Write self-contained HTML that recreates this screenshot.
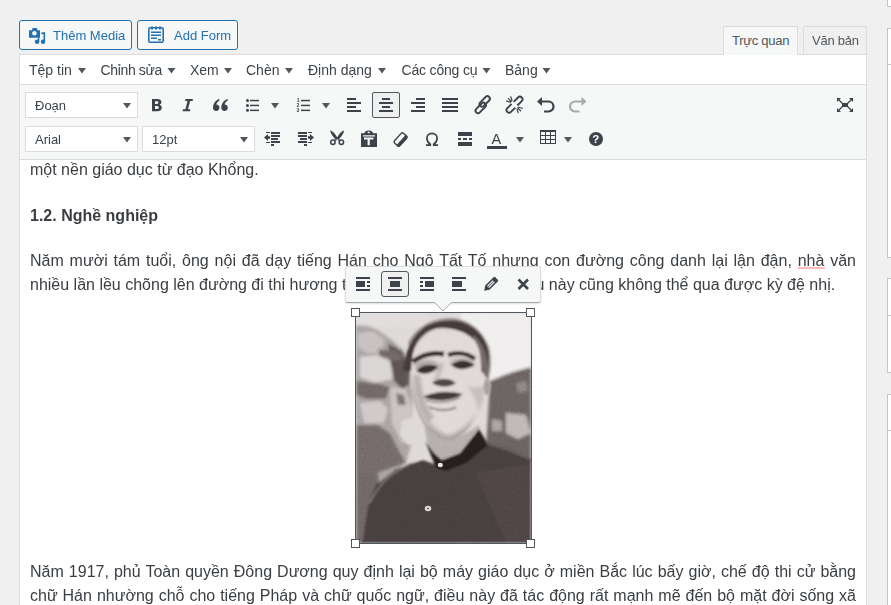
<!DOCTYPE html>
<html><head><meta charset="utf-8">
<style>
*{box-sizing:border-box}
html,body{margin:0;padding:0}
body{width:891px;height:605px;overflow:hidden;background:#f0f0f1;position:relative;font-family:"Liberation Sans",sans-serif;color:#3c434a}
.a{position:absolute}
.box{position:absolute;left:887px;width:40px;background:#fff;border:1px solid #c3c4c7}
.btn{position:absolute;top:20px;height:30px;border:1px solid #2271b1;border-radius:3px;background:#f6f7f7;color:#2271b1;font-size:13px}
.btn span{position:absolute;top:7px;white-space:nowrap}
.tab{position:absolute;top:26px;height:29px;border:1px solid #dcdcde;font-size:13px;color:#50575e;letter-spacing:-0.25px}
.tab span{position:absolute;top:6px;white-space:nowrap}
.menu{position:absolute;top:62px;font-size:14px;color:#3c434a;white-space:nowrap}
.sel{position:absolute;height:26px;width:113px;border:1px solid #dcdcde;background:#fff;font-size:13px;color:#3c434a}
.sel span{position:absolute;left:9px;top:5px}
.txt{position:absolute;left:30px;width:826px;font-size:16px;line-height:24px;color:#3a3e42;white-space:nowrap}
.j{text-align:justify;text-align-last:justify;white-space:normal}
</style></head><body>

<!-- sidebar boxes -->
<div class="box" style="top:-10px;height:17px"></div>
<div class="box" style="top:28px;height:230px"><div class="a" style="left:0;top:35px;width:40px;height:1px;background:#c3c4c7"></div></div>
<div class="box" style="top:278px;height:95px"><div class="a" style="left:0;top:36px;width:40px;height:1px;background:#c3c4c7"></div></div>
<div class="box" style="top:394px;height:240px"><div class="a" style="left:0;top:35px;width:40px;height:1px;background:#c3c4c7"></div></div>

<!-- buttons -->
<div class="btn" style="left:19px;width:113px"><span style="left:33px">Thêm Media</span></div>
<div class="btn" style="left:137px;width:101px"><span style="left:36px">Add Form</span></div>

<!-- tabs -->
<div class="tab" style="left:723px;width:75px;background:#f6f7f7;border-bottom-color:#f6f7f7;z-index:3"><span style="left:8px">Trực quan</span></div>
<div class="tab" style="left:803px;width:64px;background:#f0f0f1"><span style="left:8px">Văn bản</span></div>

<!-- editor -->
<div class="a" style="left:19px;top:54px;width:848px;height:600px;border:1px solid #dcdcde;background:#fff"></div>
<div class="a" style="left:20px;top:84px;width:846px;height:1px;background:#dcdcde"></div>
<div class="a" style="left:20px;top:85px;width:846px;height:74px;background:#f6f7f7"></div>
<div class="a" style="left:20px;top:159px;width:846px;height:1px;background:#dcdcde"></div>

<div class="menu" style="left:29px">Tệp tin</div>
<div class="menu" style="left:100.5px;letter-spacing:-0.35px">Chỉnh sửa</div>
<div class="menu" style="left:190px">Xem</div>
<div class="menu" style="left:246px">Chèn</div>
<div class="menu" style="left:308px">Định dạng</div>
<div class="menu" style="left:401.5px;letter-spacing:-0.18px">Các công cụ</div>
<div class="menu" style="left:505px">Bảng</div>

<div class="sel" style="left:25px;top:92px"><span>Đoạn</span></div>
<div class="sel" style="left:25px;top:126px"><span>Arial</span></div>
<div class="sel" style="left:142px;top:126px;width:113px"><span>12pt</span></div>

<!-- active align center button -->
<div class="a" style="left:372px;top:92px;width:28px;height:26px;border:1px solid #50575e;border-radius:2px;background:#f0f0f1"></div>

<!-- content -->
<div class="txt" style="top:158px;clip-path:inset(2px 0 0 0)">một nền giáo dục từ đạo Khổng.</div>
<div class="txt" style="top:204px;font-weight:bold">1.2. Nghề nghiệp</div>
<div class="txt j" style="top:249px">Năm mười tám tuổi, ông nội đã dạy tiếng Hán cho Ngô Tất Tố nhưng con đường công danh lại lận đận, nhà văn</div>
<div class="txt" style="top:273px">nhiều lần lều chõng lên đường đi thi hương t</div>
<div class="txt" style="top:273px;left:535.5px;width:auto">u này cũng không thể qua được kỳ đệ nhị.</div>
<div class="txt j" style="top:560px">Năm 1917, phủ Toàn quyền Đông Dương quy định lại bộ máy giáo dục ở miền Bắc lúc bấy giờ, chế độ thi cử bằng</div>
<div class="txt j" style="top:584px">chữ Hán nhường chỗ cho tiếng Pháp và chữ quốc ngữ, điều này đã tác động rất mạnh mẽ đến bộ mặt đời sống xã</div>


<div class="a" style="left:798px;top:267px;width:27px;height:2px;background:#ffbcbc"></div>
<!-- image -->
<div class="a" style="left:355px;top:312px;width:177px;height:232px;border:1px solid #50575e;background:#d6d0d0;overflow:hidden">
<svg width="175" height="230" viewBox="0 0 175 230" style="display:block">
<defs>
<filter id="bl" x="-10%" y="-10%" width="120%" height="120%"><feGaussianBlur stdDeviation="1.1"/></filter>
<filter id="bl2" x="-10%" y="-10%" width="120%" height="120%"><feGaussianBlur stdDeviation="1.7"/></filter>
<filter id="bl3" x="-10%" y="-10%" width="120%" height="120%"><feGaussianBlur stdDeviation="0.6"/></filter>
</defs>
<rect width="175" height="230" fill="#dcd7d7"/>
<g filter="url(#bl2)">
<rect x="105" y="0" width="70" height="66" fill="#efecec"/>
<rect x="0" y="0" width="70" height="14" fill="#e0dbdb"/>
<!-- left foliage -->
<path d="M0,12 L12,13 L22,17 L36,27 L48,38 L56,60 L57,125 L50,150 L22,172 L8,230 L0,230 Z" fill="#a39b9b"/>
<path d="M2,20 L16,18 L28,26 L26,40 L10,40 L2,34 Z" fill="#c2bbbb"/>
<path d="M4,44 L24,42 L36,50 L36,66 L18,70 L4,64 Z" fill="#d8d2d2"/>
<path d="M0,68 L20,70 L34,74 L30,86 L10,86 L0,82 Z" fill="#6a6161"/>
<path d="M32,30 L46,38 L54,54 L53,72 L46,76 L38,68 L34,48 Z" fill="#564d4d"/>
<path d="M22,36 L40,38 L48,44 L42,48 L24,44 Z" fill="#6a6161"/>
<path d="M4,90 L24,88 L32,96 L28,110 L8,110 Z" fill="#cbc4c4"/>
<path d="M34,74 L50,76 L56,96 L60,128 L46,130 L36,110 Z" fill="#c6bfbf"/>
<path d="M40,80 L48,82 L50,92 L42,92 Z" fill="#6f6767"/>
<path d="M0,112 L22,112 L34,120 L40,132 L50,150 L22,160 L0,160 Z" fill="#6c6464"/>
<path d="M0,160 L22,160 L24,174 L14,190 L8,230 L0,230 Z" fill="#676060"/>
<!-- right foliage -->
<path d="M134,68 L148,62 L160,58 L175,54 L175,150 L150,138 L130,133 Z" fill="#635b5b"/>
<path d="M150,100 L170,102 L175,120 L162,126 L150,120 Z" fill="#b9b2b2"/>
<path d="M136,106 L146,108 L146,118 L136,118 Z" fill="#a39c9c"/>
<path d="M160,70 L170,68 L172,78 L162,80 Z" fill="#857d7d"/>
</g>
<g filter="url(#bl)">
<path d="M46,108 L58,104 L68,112 L66,130 L52,132 L44,122 Z" fill="#dcd6d6"/>
<!-- hair -->
<path d="M52,30 C60,14 76,5 95,5 C112,6 126,16 133,34 C136,46 135,58 132,68 L124,60 C124,45 120,32 110,24 C98,16 80,16 68,24 C60,30 57,38 56,48 Z" fill="#8e8686"/>
<path d="M47,58 C49,38 56,22 70,13 C80,8 95,6 106,9 C118,13 128,22 132,36 C134,46 133,56 131,66 L125,60 C125,44 122,33 116,26 C108,18 94,14 82,15 C70,17 62,25 58,36 C56,44 56,52 56,58 Z" fill="#3f3636"/>
<path d="M118,22 C126,30 131,40 132,52 C133,58 132,64 131,66 L125,60 C125,46 123,36 116,26 Z" fill="#6a6161"/>
<!-- face -->
<path d="M57,42 C60,30 68,20 80,16 C92,14 108,17 118,27 C123,33 125,42 125,58 L130,64 L133,80 L128,88 C124,100 118,108 112,113 C104,120 98,124 92,124 C84,122 76,115 70,108 C62,100 57,90 55,72 C55,58 55.5,48 57,42 Z" fill="#ddd6d6"/>
<path d="M56,60 C57,80 60,95 70,108 C65,106 58,95 56,80 Z" fill="#aaa2a2"/>
<path d="M60,96 C66,108 78,120 92,124 C100,123 110,116 118,108 C110,120 100,128 92,130 C80,128 68,116 60,96 Z" fill="#a39b9b"/>
<g filter="url(#bl2)">
<ellipse cx="71" cy="53" rx="12" ry="6" fill="#a39b9b"/>
<ellipse cx="106" cy="50" rx="12" ry="5" fill="#a8a0a0"/>
<path d="M84,50 C82,58 80,64 77,70 L82,70 C84,62 86,56 88,50 Z" fill="#b2aaaa"/>
<path d="M57,62 C58,82 62,98 72,110 L78,104 C70,94 66,80 64,62 Z" fill="#b1a9a9"/>
<path d="M66,98 C74,112 84,120 92,122 C102,120 112,112 120,100 C116,112 104,124 92,126 C80,124 70,112 66,98 Z" fill="#aaa2a2"/>
<path d="M112,74 C118,82 122,92 122,100 C126,92 128,84 128,74 Z" fill="#c0b8b8"/>
</g>
<!-- eyebrows -->
<path d="M57,49 C65,42 77,39 88,41" stroke="#332b2b" stroke-width="5" fill="none"/>
<path d="M92,42 C101,39 111,40 119,46" stroke="#332b2b" stroke-width="4.5" fill="none"/>
<!-- eyes -->
<path d="M60,58 C66,51 75,50 82,54 C76,61 67,63 60,58 Z" fill="#342c2c"/>
<path d="M95,52 C102,46 111,46 119,52 C111,57 102,58 95,52 Z" fill="#342c2c"/>
<!-- nose -->
<path d="M76,70 C82,65 93,64 100,70 C94,75 83,75 76,70 Z" fill="#4a4141"/>
<!-- mouth -->
<path d="M67,84 C76,79 92,77 107,81 C97,88 80,90 67,84 Z" fill="#3e3535"/>
<path d="M70,87 C80,91 94,90 104,84" stroke="#8a8181" stroke-width="1.5" fill="none"/>
<path d="M73,94 C81,98 93,98 100,94" stroke="#8a8181" stroke-width="2.5" fill="none"/>
<!-- ear -->
<ellipse cx="131" cy="74" rx="3.5" ry="8" fill="#9e9696"/>
<!-- neck -->
<path d="M68,110 C74,120 84,127 92,128 C102,126 114,118 123,112 L125,124 L120,132 L100,146 L86,150 L72,136 Z" fill="#b0a8a8"/>
<!-- jacket -->
<path d="M6,230 L12,192 L20,172 L40,156 L67,147 L84,153 L105,146 L123,116 L132,130 L152,136 L175,146 L175,230 Z" fill="#433a3a"/>
<path d="M123,116 L131,133 L110,150 L90,158 L80,155 L69,128 L78,140 L86,147 L104,140 Z" fill="#221c1c"/>
<path d="M14,190 C22,172 34,160 56,150" stroke="#7a7171" stroke-width="1.5" fill="none"/>
<path d="M132,131 L152,137 L175,147" stroke="#5e5555" stroke-width="1.5" fill="none"/>
<path d="M120,160 L150,230 L175,230 L175,150 Z" fill="#4a4141"/>

</g>
<g filter="url(#bl3)">
<ellipse cx="84.3" cy="152" rx="2.6" ry="2.2" fill="#e8e2e2"/>
<ellipse cx="72" cy="195.5" rx="3.2" ry="2.8" fill="#ddd7d7"/>
<ellipse cx="72" cy="195.5" rx="1.2" ry="1" fill="#6a6262"/>
</g>
<filter id="nz" x="0" y="0" width="100%" height="100%"><feTurbulence type="fractalNoise" baseFrequency="0.45" numOctaves="2" seed="7"/><feColorMatrix type="matrix" values="0.33 0.33 0.33 0 0  0.33 0.33 0.33 0 0  0.33 0.33 0.33 0 0  0 0 0 0 0.22"/></filter>
<rect width="175" height="230" filter="url(#nz)" style="mix-blend-mode:overlay"/>
</svg>
</div>
<!-- handles -->
<div class="a" style="left:351px;top:308px;width:9px;height:9px;border:1px solid #50575e;background:#fff"></div>
<div class="a" style="left:526px;top:308px;width:9px;height:9px;border:1px solid #50575e;background:#fff"></div>
<div class="a" style="left:351px;top:539px;width:9px;height:9px;border:1px solid #50575e;background:#fff"></div>
<div class="a" style="left:526px;top:539px;width:9px;height:9px;border:1px solid #50575e;background:#fff"></div>

<!-- inline toolbar -->
<div class="a" style="left:345px;top:266px;width:196px;height:37px;background:#f6f7f7;border:1px solid #dcdcde;border-bottom-color:#a7aaad;border-radius:3px;box-shadow:0 1px 2px rgba(0,0,0,0.12);z-index:6"></div>
<div class="a" style="left:381px;top:271px;width:28px;height:26px;border:1px solid #50575e;border-radius:3px;background:#f0f0f1;z-index:6"></div>
<svg class="a" style="left:0;top:0;z-index:7" width="891" height="605" viewBox="0 0 891 605">
<path d="M434.5,302.5 L443,311 L451.5,302.5" fill="#f6f7f7" stroke="#a7aaad" stroke-width="1"/>
<rect x="435" y="300" width="16" height="3" fill="#f6f7f7"/>
<g fill="#3c434a">
<rect x="356" y="277" width="14" height="2"/><rect x="356" y="281" width="9" height="6"/><rect x="367" y="281" width="3" height="2"/><rect x="367" y="285" width="3" height="2"/><rect x="356" y="289" width="14" height="2"/>
<rect x="388" y="277" width="14" height="2"/><rect x="390" y="281" width="10" height="6"/><rect x="388" y="289" width="14" height="2"/>
<rect x="420" y="277" width="14" height="2"/><rect x="425" y="281" width="9" height="6"/><rect x="420" y="281" width="3" height="2"/><rect x="420" y="285" width="3" height="2"/><rect x="420" y="289" width="14" height="2"/>
<rect x="452" y="277" width="14" height="2"/><rect x="452" y="281" width="10" height="6"/><rect x="452" y="289" width="14" height="2"/>
<g transform="translate(490.6,284.4) rotate(-45)"><path fill-rule="evenodd" d="M-9,0 L-4.6,-3 H7.2 Q8.4,-3 8.4,-1.8 V1.8 Q8.4,3 7.2,3 H-4.6 Z M-3.6,-1.5 V1.5 H4.4 V-1.5 Z"/><rect x="-3.6" y="-0.35" width="8" height="0.7"/></g>
</g>
<path d="M518.5,279.5 L528,289 M528,279.5 L518.5,289" stroke="#3c434a" stroke-width="2.6"/>
</svg>

<svg class="a" style="left:0;top:0;z-index:5" width="891" height="605" viewBox="0 0 891 605">
<g fill="#50575e">
<!-- menu carets -->
<path d="M78,68h8l-4,5.5z"/>
<path d="M167.5,68h8l-4,5.5z"/>
<path d="M224,68h8l-4,5.5z"/>
<path d="M285,68h8l-4,5.5z"/>
<path d="M378,68h8l-4,5.5z"/>
<path d="M482.5,68h8l-4,5.5z"/>
<path d="M542.5,68h8l-4,5.5z"/>
<!-- select carets -->
<path d="M123,103h8l-4,5.5z"/>
<path d="M123,137h8l-4,5.5z"/>
<path d="M240,137h8l-4,5.5z"/>
<!-- toolbar carets -->
<path d="M271,103h8l-4,5.5z"/>
<path d="M322,103h8l-4,5.5z"/>
<path d="M516,137h8l-4,5.5z"/>
<path d="M564,137h8l-4,5.5z"/>
</g>
<g fill="#3c434a">
<!-- Bold -->
<path fill-rule="evenodd" d="M152,99h5.3c2.6,0,4.1,1.2,4.1,3.1c0,1.3-0.8,2.2-1.9,2.6c1.4,0.4,2.3,1.5,2.3,3c0,2.2-1.7,3.5-4.5,3.5h-5.3z M155,101.3v2.6h1.9c0.9,0,1.5-0.5,1.5-1.3c0-0.8-0.6-1.3-1.5-1.3z M155,106v3h2.1c1,0,1.6-0.5,1.6-1.5c0-1-0.6-1.5-1.6-1.5z"/>
<!-- Italic -->
<path d="M185.6,99h7.4l-0.5,1.9h-2.4l-2.1,8.4h2.4l-0.5,1.9h-7.4l0.5-1.9h2.4l2.1-8.4h-2.4z"/>
<!-- Quote -->
<path d="M213,107.8c0-4.2,2.4-7.4,5.9-8.9l0.8,1.4c-2,1.1-3.1,2.7-3.3,4.2c1.8,0.1,3.1,1.4,3.1,3.2c0,1.9-1.5,3.3-3.3,3.3c-1.9,0-3.2-1.3-3.2-3.2z M221.3,107.8c0-4.2,2.4-7.4,5.9-8.9l0.8,1.4c-2,1.1-3.1,2.7-3.3,4.2c1.8,0.1,3.1,1.4,3.1,3.2c0,1.9-1.5,3.3-3.3,3.3c-1.9,0-3.2-1.3-3.2-3.2z"/>
<!-- bullet list -->
<circle cx="247.5" cy="100.5" r="1.5"/><circle cx="247.5" cy="105.5" r="1.5"/><circle cx="247.5" cy="110.3" r="1.5"/>
<rect x="250" y="99.8" width="9" height="1.5"/><rect x="250" y="104.7" width="9" height="1.5"/><rect x="250" y="109.6" width="9" height="1.5"/>
<!-- numbered list -->
<text x="296.8" y="102.3" font-size="5" font-family="Liberation Sans" font-weight="bold">1</text>
<text x="296.5" y="107.2" font-size="5" font-family="Liberation Sans" font-weight="bold">2</text>
<text x="296.5" y="112" font-size="5" font-family="Liberation Sans" font-weight="bold">3</text>
<rect x="301" y="99.8" width="9" height="1.5"/><rect x="301" y="104.7" width="9" height="1.5"/><rect x="301" y="109.6" width="9" height="1.5"/>
<!-- align left -->
<rect x="347" y="98" width="9" height="2"/><rect x="347" y="102" width="14" height="2"/><rect x="347" y="106" width="9" height="2"/><rect x="347" y="110" width="14" height="2"/>
<!-- align center -->
<rect x="382" y="98" width="8" height="2"/><rect x="379" y="102" width="14" height="2"/><rect x="382" y="106" width="8" height="2"/><rect x="379" y="110" width="14" height="2"/>
<!-- align right -->
<rect x="416" y="98" width="9" height="2"/><rect x="411" y="102" width="14" height="2"/><rect x="416" y="106" width="9" height="2"/><rect x="411" y="110" width="14" height="2"/>
<!-- justify -->
<rect x="442" y="98" width="16" height="2"/><rect x="442" y="102" width="16" height="2"/><rect x="442" y="106" width="16" height="2"/><rect x="442" y="110" width="16" height="2"/>
</g>
<!-- link -->
<g fill="none" stroke="#3c434a" stroke-width="1.9">
<g transform="translate(482.7,104.7) rotate(-45)"><rect x="-10" y="-1.6" width="12.6" height="5" rx="2.5"/><rect x="-2.6" y="-3.4" width="12.6" height="5" rx="2.5"/></g>
</g>
<!-- unlink -->
<g fill="none" stroke="#3c434a" stroke-width="1.9">
<g transform="translate(514.5,104.7) rotate(-45)"><path d="M1.5,-2.6H7.6A2.6,2.6 0 0 1 7.6,2.6H1.5 M-1.5,-2.6H-7.6A2.6,2.6 0 0 0 -7.6,2.6H-1.5"/>
<path stroke-width="1.2" d="M-0.9,-4.2L-3.2,-8.6 M0,-4.2L0,-9.2 M0.9,-4.2L3.2,-8.6 M-0.9,4.2L-3.2,8.6 M0,4.2L0,9.2 M0.9,4.2L3.2,8.6"/></g>
</g>
<!-- undo -->
<g fill="none" stroke="#3c434a" stroke-width="2.2"><path d="M541,101.5h7.5a5,5 0 0 1 0,10h-4.5"/></g>
<path fill="#3c434a" d="M537,101.5l5,-4.5v9z"/>
<!-- redo -->
<g fill="none" stroke="#a7aaad" stroke-width="2.2"><path d="M582.5,101.5h-7.5a5,5 0 0 0 0,10h4.5"/></g>
<path fill="#a7aaad" d="M586.5,101.5l-5,-4.5v9z"/>
<!-- fullscreen -->
<g fill="#3c434a">
<rect x="842" y="103" width="6" height="4"/>
<path d="M837,98h4l-4,4z M853,98h-4l4,4z M837,112h4l-4,-4z M853,112h-4l4,-4z"/>
</g>
<path d="M838.5,99.5L842.5,103.5 M851.5,99.5L847.5,103.5 M838.5,110.5L842.5,106.5 M851.5,110.5L847.5,106.5" stroke="#3c434a" stroke-width="1.2"/>
<!-- row 2 -->
<g fill="#3c434a">
<!-- outdent -->
<rect x="266" y="132" width="4" height="1"/><rect x="266" y="142" width="4" height="1"/>
<rect x="271" y="132" width="9" height="2"/><rect x="271" y="135" width="9" height="2"/><rect x="271" y="138" width="7" height="2"/><rect x="271" y="141" width="9" height="2"/><rect x="271" y="144" width="3" height="2"/>
<path d="M264,137.5l4,-3.5v2.3h2v2.4h-2v2.3z"/>
<!-- indent -->
<rect x="308" y="132" width="4" height="1"/><rect x="308" y="142" width="4" height="1"/>
<rect x="298" y="132" width="9" height="2"/><rect x="298" y="135" width="9" height="2"/><rect x="300" y="138" width="7" height="2"/><rect x="298" y="141" width="9" height="2"/><rect x="304" y="144" width="3" height="2"/>
<path d="M314,137.5l-4,-3.5v2.3h-2v2.4h2v2.3z"/>
</g>
<!-- scissors -->
<g fill="none" stroke="#3c434a" stroke-width="1.5">
<circle cx="332.9" cy="142.3" r="2.2"/><circle cx="341.4" cy="142.3" r="2.2"/>
</g>
<g fill="#3c434a">
<path d="M330,130.5 C332,130.8 335,133 337.6,138.3 L336.2,140.2 C333.5,137.5 331,134.5 330,130.5 Z"/>
<path d="M344.3,130.5 C342.3,130.8 339.3,133 336.7,138.3 L338.1,140.2 C340.8,137.5 343.3,134.5 344.3,130.5 Z"/>
<path d="M335,139.2 L336.6,140.3 L334.6,141.3 L333.8,140.5 Z M339.3,139.2 L337.7,140.3 L339.7,141.3 L340.5,140.5 Z"/>
</g>
<!-- paste as text -->
<g fill="#3c434a">
<path fill-rule="evenodd" d="M361,133.2h16v13.8h-16z M363,135.2v1.2h12v-1.2z M364,137.6v2h3.6v5.6h2.2v-5.6h3.6v-2z"/>
<path fill-rule="evenodd" d="M364,134.6 C364,132.2 366,130.6 368.7,130.6 C371.4,130.6 373.4,132.2 373.4,134.6 Z M368.7,131.6a1.1,1.1 0 1 0 0.01,0z"/>
</g>
<!-- eraser -->
<g transform="translate(400.5,139.5) rotate(-48)">
<rect x="-6.6" y="-3.6" width="13.2" height="7.2" rx="1.6" fill="none" stroke="#3c434a" stroke-width="1.4"/>
<path d="M-7.3,0.8h14.6v1.2a2.3,2.3 0 0 1 -2.3,2.3h-10a2.3,2.3 0 0 1 -2.3,-2.3z" fill="#3c434a"/>
</g>
<!-- omega -->
<path fill="none" stroke="#3c434a" stroke-width="1.7" d="M426,145.2h4.3v-0.9c-2.2,-1.4 -3.4,-3.6 -3.4,-6c0,-3 2.2,-5 5.1,-5c2.9,0 5.1,2 5.1,5c0,2.4 -1.2,4.6 -3.4,6v0.9h4.3"/>
<!-- more tag -->
<g fill="#3c434a">
<rect x="458" y="132" width="14" height="4"/><rect x="458" y="142" width="14" height="4"/>
<rect x="458" y="138" width="3" height="2"/><rect x="463" y="138" width="4" height="2"/><rect x="469" y="138" width="3" height="2"/>
</g>
<!-- text color -->
<text x="491.5" y="144" font-size="14.5" font-family="Liberation Sans" fill="#3c434a">A</text>
<rect x="487" y="146" width="20" height="3" fill="#3c434a"/>
<!-- table -->
<g fill="none" stroke="#3c434a" stroke-width="1">
<rect x="540.5" y="131.5" width="15" height="12"/>
<path d="M545.5,131.5v12 M550.5,131.5v12 M540.5,135.5h15 M540.5,139.5h15"/>
</g>
<rect x="540" y="130" width="16" height="2" fill="#3c434a"/>
<!-- help -->
<circle cx="596" cy="139" r="7" fill="#3c434a"/>
<text x="592.2" y="143.3" font-size="11.5" font-weight="bold" font-family="Liberation Sans" fill="#fff">?</text>

<!-- media button icon -->
<g fill="#2271b1">
<path fill-rule="evenodd" d="M29,30.2h3l0.6,-2.2h4.2l0.6,2.2h2.6v7.6h-11z M34.4,31a2.3,2.3 0 1 0 0.01,0z"/>
<circle cx="37" cy="41.8" r="2.2"/><circle cx="43" cy="41.8" r="2.2"/>
<rect x="43.5" y="32.4" width="1.6" height="9.5"/><rect x="37.8" y="37.5" width="1.5" height="4.5"/><rect x="41.3" y="32.4" width="3.8" height="1.8"/>
</g>
<!-- add form icon -->
<g fill="none" stroke="#2271b1" stroke-width="1.6">
<rect x="148.8" y="27.8" width="14.4" height="14.4" rx="1.5"/>
</g>
<g fill="#2271b1">
<rect x="151" y="31.5" width="10" height="1.5"/><rect x="151" y="34.5" width="10" height="1.5"/><rect x="151" y="37.5" width="6" height="1.5"/><rect x="158" y="39" width="3" height="1.5"/>
<rect x="151" y="26.5" width="2" height="3"/><rect x="155" y="26.5" width="2" height="3"/><rect x="159" y="26.5" width="2" height="3"/>
</g>
</svg>
</body></html>
